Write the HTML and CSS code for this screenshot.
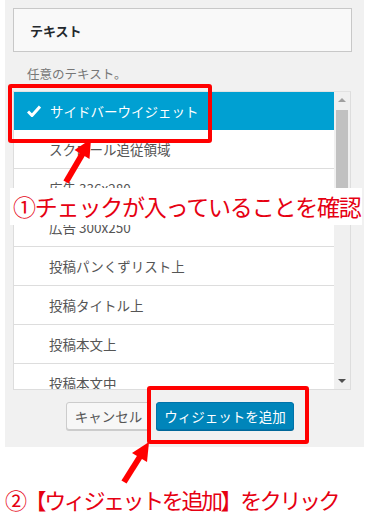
FILE: index.html
```html
<!DOCTYPE html>
<html lang="ja">
<head>
<meta charset="utf-8">
<link rel="stylesheet" href="styles.css">
</head>
<body>
<div class="page">
  <div class="panel">
    <div class="title-box">テキスト</div>
    <div class="desc">任意のテキスト。</div>
    <div class="list">
      <div class="items">
        <div class="item selected">
          <svg class="check" width="14" height="12" viewBox="0 0 14 12"><path d="M1 6.5 L5 10.5 L13 1.5" fill="none" stroke="#fff" stroke-width="3"/></svg>
          <span>サイドバーウイジェット</span>
        </div>
        <div class="item">スクロール追従領域</div>
        <div class="item">広告 336x280</div>
        <div class="item">広告 300x250</div>
        <div class="item">投稿パンくずリスト上</div>
        <div class="item">投稿タイトル上</div>
        <div class="item">投稿本文上</div>
        <div class="item last">投稿本文中</div>
      </div>
      <div class="scrollbar">
        <div class="arrow up"></div>
        <div class="track"><div class="thumb"></div></div>
        <div class="arrow down"></div>
      </div>
    </div>
    <div class="actions">
      <button class="btn cancel">キャンセル</button>
      <button class="btn primary">ウィジェットを追加</button>
    </div>
  </div>

  <div class="redbox box1"></div>
  <div class="redbox box2"></div>
  <svg class="arrows" width="375" height="529" viewBox="0 0 375 529">
    <line x1="66" y1="182" x2="83" y2="153" stroke="#f00" stroke-width="6"/>
    <polygon points="91,139 89.5,159 74.5,150" fill="#f00"/>
    <line x1="124" y1="482" x2="141" y2="455" stroke="#f00" stroke-width="6"/>
    <polygon points="149,442 147,462 132,453" fill="#f00"/>
  </svg>
  <div class="note note1">①チェックが入っていることを確認</div>
  <div class="note note2">②【ウィジェットを追加】をクリック</div>
</div>
</body>
</html>
```

FILE: styles.css
```css
html, body {
  margin: 0;
  padding: 0;
  background: #fff;
}
.page {
  position: relative;
  width: 375px;
  height: 529px;
  overflow: hidden;
  font-family: "Noto Sans CJK JP", "Noto Sans", sans-serif;
}
.panel {
  margin-left: 5px;
  width: 359px;
  height: 447px;
  background: #f1f1f1;
  box-sizing: border-box;
  padding: 8px 12px 0 8px;
  display: flex;
  flex-direction: column;
}
.title-box {
  height: 44px;
  box-sizing: border-box;
  border: 1px solid #c8c8c8;
  background: #f9f9f9;
  padding-left: 16px;
  display: flex;
  align-items: center;
  font-size: 13px;
  font-weight: bold;
  color: #23282d;
}
.desc {
  margin-top: 13px;
  height: 18px;
  line-height: 18px;
  padding-left: 14px;
  font-size: 12.5px;
  color: #777;
}
.list {
  margin-top: 8px;
  width: 338px;
  height: 299px;
  box-sizing: border-box;
  border: 1px solid #ddd;
  border-top: 1px solid #e2e2e2;
  background: #fff;
  display: flex;
  overflow: hidden;
}
.items {
  flex: 1;
  overflow: hidden;
}
.item {
  height: 39px;
  box-sizing: border-box;
  border-bottom: 1px solid #ddd;
  display: flex;
  align-items: center;
  padding-left: 35px;
  font-size: 13.5px;
  color: #555;
}
.item.selected {
  height: 38px;
  background: #00a0d2;
  color: #fff;
  padding-left: 13px;
  border-bottom: none;
}
.item.selected .check {
  margin-right: 9px;
}
.scrollbar {
  width: 16px;
  background: #f0f0f0;
  display: flex;
  flex-direction: column;
  align-items: center;
}
.arrow {
  width: 0;
  height: 0;
  border-left: 4px solid transparent;
  border-right: 4px solid transparent;
  margin: 6px 0;
}
.arrow.up {
  border-bottom: 4px solid #a0a0a0;
}
.arrow.down {
  border-top: 4px solid #505050;
}
.track {
  flex: 1;
  width: 12px;
  padding-top: 2px;
}
.thumb {
  width: 12px;
  height: 96px;
  background: #c1c1c1;
}
.actions {
  margin-top: 12px;
  display: flex;
  justify-content: center;
  gap: 5px;
  padding-right: 5px;
}
.btn {
  height: 28px;
  box-sizing: border-box;
  border-radius: 3px;
  font-family: "Noto Sans CJK JP", "Noto Sans", sans-serif;
  font-size: 13.5px;
  padding: 0;
  line-height: 26px;
  white-space: nowrap;
  text-align: center;
}
.cancel {
  width: 85px;
  background: #f7f7f7;
  border: 1px solid #ccc;
  color: #555;
  box-shadow: 0 1px 0 #ccc;
}
.primary {
  width: 138px;
  background: #0085ba;
  border: 1px solid #0073aa;
  color: #fff;
  box-shadow: 0 1px 0 #006799;
}
.redbox {
  position: absolute;
  border: 4px solid #f00;
  border-radius: 3px;
  box-sizing: border-box;
}
.box1 {
  left: 8px;
  top: 84px;
  width: 204px;
  height: 59px;
}
.box2 {
  left: 147px;
  top: 386px;
  width: 162px;
  height: 58px;
}
.arrows {
  position: absolute;
  left: 0;
  top: 0;
}
.note {
  position: absolute;
  color: #e60012;
  line-height: 37px;
  white-space: nowrap;
}
.note1 {
  left: 10px;
  top: 188px;
  width: 352px;
  padding-left: 3px;
  box-sizing: border-box;
  background: #fff;
  font-size: 23px;
  letter-spacing: -1.2px;
}
.note2 {
  left: 5px;
  top: 481px;
  font-size: 22px;
  letter-spacing: -2.4px;
}
```
